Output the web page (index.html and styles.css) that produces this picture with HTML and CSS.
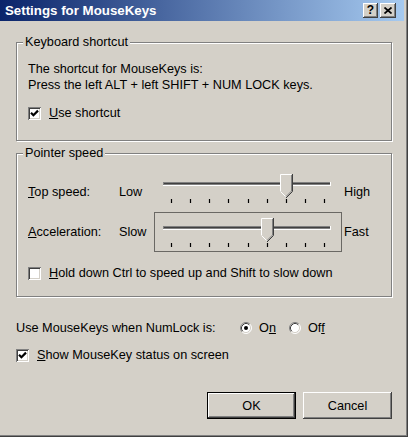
FILE: index.html
```html
<!DOCTYPE html>
<html>
<head>
<meta charset="utf-8">
<title>Settings for MouseKeys</title>
<link rel="stylesheet" href="styles.css">
</head>
<body>
<div class="window">
  <div class="frame">
    <div class="titlebar">
      <span class="title">Settings for MouseKeys</span>
      <span class="tbtn help">?</span>
      <span class="tbtn close"><svg width="8" height="7" viewBox="0 0 8 7"><path d="M0.5 0.5 L7.5 6.5 M7.5 0.5 L0.5 6.5" stroke="#000" stroke-width="1.7"/></svg></span>
    </div>
    <div class="content">
      <div class="group g1">
        <span class="legend">Keyboard shortcut</span>
        <div class="line">The shortcut for MouseKeys is:</div>
        <div class="line">Press the left ALT + left SHIFT + NUM LOCK keys.</div>
        <div class="check c1">
          <span class="box"><svg width="9" height="9" viewBox="0 0 9 9"><path d="M1 3.8 L3.4 6.2 L8 1.6" stroke="#000" stroke-width="2.2" fill="none"/></svg></span>
          <span><u>U</u>se shortcut</span>
        </div>
      </div>
      <div class="group g2">
        <span class="legend">Pointer speed</span>
        <div class="srow">
          <span class="slabel"><u>T</u>op speed:</span>
          <span class="smin">Low</span>
          <svg class="slider" width="188" height="40" viewBox="0 0 188 40">
            <rect x="9" y="10" width="168" height="4" fill="#fff"/>
            <rect x="9" y="10" width="167" height="3" fill="#808080"/>
            <rect x="10" y="11" width="166" height="1" fill="#404040"/>
            <path d="M17.5 27v4M36.5 27v4M55.5 27v4M74.5 27v4M94.5 27v4M113.5 27v4M132.5 27v4M151.5 27v4M170.5 27v4" stroke="#000" stroke-width="1.2"/>
            <path d="M126 2h12v17l-6 6l-6-6z" fill="#d4d0c8"/>
            <path d="M126.5 19V2.5H137.5" stroke="#fff" fill="none"/>
            <path d="M126.5 19.5l5.5 5.5" stroke="#fff" fill="none"/>
            <path d="M138.5 2v17.5l-6.5 6.5" stroke="#404040" fill="none"/>
            <path d="M137.5 3v16l-5.5 5.5" stroke="#808080" fill="none"/>
          </svg>
          <span class="smax">High</span>
        </div>
        <div class="srow">
          <span class="slabel"><u>A</u>cceleration:</span>
          <span class="smin">Slow</span>
          <svg class="slider" width="188" height="40" viewBox="0 0 188 40">
            <rect x="0.5" y="0.5" width="187" height="39" fill="none" stroke="#000" stroke-dasharray="1 1"/>
            <rect x="9" y="14" width="168" height="4" fill="#fff"/>
            <rect x="9" y="14" width="167" height="3" fill="#808080"/>
            <rect x="10" y="15" width="166" height="1" fill="#404040"/>
            <path d="M17.5 31v4M36.5 31v4M55.5 31v4M74.5 31v4M94.5 31v4M113.5 31v4M132.5 31v4M151.5 31v4M170.5 31v4" stroke="#000" stroke-width="1.2"/>
            <path d="M107 6h12v17l-6 6l-6-6z" fill="#d4d0c8"/>
            <path d="M107.5 23V6.5H118.5" stroke="#fff" fill="none"/>
            <path d="M107.5 23.5l5.5 5.5" stroke="#fff" fill="none"/>
            <path d="M119.5 6v17.5l-6.5 6.5" stroke="#404040" fill="none"/>
            <path d="M118.5 7v16l-5.5 5.5" stroke="#808080" fill="none"/>
          </svg>
          <span class="smax">Fast</span>
        </div>
        <div class="check c2">
          <span class="box"></span>
          <span><u>H</u>old down Ctrl to speed up and Shift to slow down</span>
        </div>
      </div>
      <div class="numrow">
        <span class="numlabel">Use MouseKeys when NumLock is:</span>
        <svg class="radio" width="12" height="12" viewBox="0 0 12 12">
          <circle cx="6" cy="6" r="5" fill="#fff"/>
          <path d="M2.11 9.89A5.5 5.5 0 0 1 9.89 2.11" stroke="#808080" fill="none"/>
          <path d="M2.82 9.18A4.5 4.5 0 0 1 9.18 2.82" stroke="#404040" fill="none"/>
          <path d="M9.89 2.11A5.5 5.5 0 0 1 2.11 9.89" stroke="#fff" fill="none"/>
          <path d="M9.18 2.82A4.5 4.5 0 0 1 2.82 9.18" stroke="#d4d0c8" fill="none"/>
          <circle cx="6" cy="6" r="2" fill="#000"/>
        </svg>
        <span class="rlabel on">O<u>n</u></span>
        <svg class="radio" width="12" height="12" viewBox="0 0 12 12">
          <circle cx="6" cy="6" r="5" fill="#fff"/>
          <path d="M2.11 9.89A5.5 5.5 0 0 1 9.89 2.11" stroke="#808080" fill="none"/>
          <path d="M2.82 9.18A4.5 4.5 0 0 1 9.18 2.82" stroke="#404040" fill="none"/>
          <path d="M9.89 2.11A5.5 5.5 0 0 1 2.11 9.89" stroke="#fff" fill="none"/>
          <path d="M9.18 2.82A4.5 4.5 0 0 1 2.82 9.18" stroke="#d4d0c8" fill="none"/>
        </svg>
        <span class="rlabel">Of<u>f</u></span>
      </div>
      <div class="check c3">
        <span class="box"><svg width="9" height="9" viewBox="0 0 9 9"><path d="M1 3.8 L3.4 6.2 L8 1.6" stroke="#000" stroke-width="2.2" fill="none"/></svg></span>
        <span><u>S</u>how MouseKey status on screen</span>
      </div>
      <div class="buttons">
        <button class="btn default">OK</button>
        <button class="btn">Cancel</button>
      </div>
    </div>
  </div>
</div>
</body>
</html>
```
FILE: styles.css
```css
html, body {
  margin: 0;
  padding: 0;
  background: #d4d0c8;
}
body {
  font-family: "Liberation Sans", Arial, sans-serif;
  font-size: 12.7px;
  line-height: 16px;
  color: #000;
}
.window {
  width: 408px;
  height: 437px;
  box-sizing: border-box;
  border-right: 1px solid #404040;
  border-bottom: 1px solid #404040;
  background: #d4d0c8;
}
.frame {
  height: 100%;
  box-sizing: border-box;
  border-right: 1px solid #808080;
  border-bottom: 1px solid #808080;
  padding-right: 2px;
}
.titlebar {
  height: 21px;
  display: flex;
  align-items: center;
  padding: 0 8px 0 5px;
  background: linear-gradient(to right, #0a246a, #a6caf0);
}
.title {
  flex: 1;
  color: #fff;
  font-weight: bold;
  font-size: 13.3px;
}
.tbtn {
  height: 15px;
  box-sizing: border-box;
  background: #d4d0c8;
  display: flex;
  align-items: center;
  justify-content: center;
  box-shadow: inset -1px -1px #404040, inset 1px 1px #fff, inset -2px -2px #808080;
  font-weight: bold;
  font-size: 12px;
  line-height: 15px;
}
.help {
  width: 15px;
  margin-right: 2px;
}
.close {
  width: 16px;
}
.content {
  padding: 0 12px 0 16px;
}
.group {
  position: relative;
  border: 1px solid #808080;
  box-shadow: inset 1px 1px #fff, 1px 1px #fff;
}
.legend {
  position: absolute;
  top: -9px;
  left: 6px;
  padding: 0 2px;
  background: #d4d0c8;
}
.g1 {
  margin-top: 21px;
  padding: 18px 11px 19px 11px;
}
.g2 {
  margin-top: 12px;
  padding: 18px 0 15px 11px;
}
.check {
  display: flex;
  align-items: center;
  gap: 8px;
  height: 16px;
}
.c1 {
  margin-top: 12px;
}
.c2 {
  margin-top: 13px;
}
.c3 {
  margin-top: 11px;
}
.box {
  width: 13px;
  height: 13px;
  box-sizing: border-box;
  background: #fff;
  display: flex;
  align-items: center;
  justify-content: center;
  box-shadow: inset 1px 1px #808080, inset -1px -1px #fff, inset 2px 2px #404040, inset -2px -2px #d4d0c8;
}
.srow {
  display: flex;
  align-items: center;
  height: 40px;
}
.slabel {
  width: 91px;
}
.smin {
  width: 35px;
}
.slider {
  display: block;
  flex: none;
}
.smax {
  margin-left: 2px;
}
.numrow {
  margin-top: 23px;
  display: flex;
  align-items: center;
  height: 16px;
}
.numlabel {
  width: 224px;
}
.radio {
  display: block;
  flex: none;
}
.rlabel {
  margin-left: 7px;
}
.rlabel.on {
  width: 30px;
}
.buttons {
  margin-top: 29px;
  display: flex;
  justify-content: flex-end;
  gap: 7px;
}
.btn {
  width: 89px;
  height: 27px;
  box-sizing: border-box;
  border: none;
  background: #d4d0c8;
  font-family: "Liberation Sans", Arial, sans-serif;
  font-size: 12.7px;
  color: #000;
  padding: 0;
  box-shadow: inset -1px -1px #404040, inset 1px 1px #fff, inset -2px -2px #808080;
}
.btn.default {
  border: 1px solid #000;
}
```
